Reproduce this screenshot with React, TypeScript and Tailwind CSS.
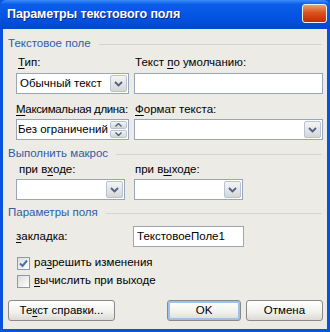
import { ReactNode } from 'react'

const Chevron = () => (
  <svg width="9" height="6" viewBox="0 0 9 6">
    <path d="M1 1 L4.5 4.5 L8 1" stroke="#4d6185" strokeWidth="1.8" fill="none" />
  </svg>
)

const DropButton = () => (
  <div className="w-[17px] m-px flex items-center justify-center border border-[#b9c3d6] rounded-[2px] bg-[linear-gradient(#f4f4f4,#d6d6d6)]">
    <Chevron />
  </div>
)

const Combo = ({ width, text }: { width: string; text?: string }) => (
  <div className={`${width} h-[21px] flex border border-[#9aa6b8] bg-white`}>
    <div className="flex-1 px-[3px] flex items-center text-[11.5px] text-black whitespace-nowrap overflow-hidden">{text}</div>
    <DropButton />
  </div>
)

const Spin = ({ text }: { text: string }) => (
  <div className="w-[113px] h-[21px] flex border border-[#9aa6b8] bg-white">
    <div className="flex-1 px-[1px] flex items-center text-[11.5px] text-black whitespace-nowrap overflow-hidden">{text}</div>
    <div className="w-[17px] m-px flex flex-col gap-px">
      <div className="flex-1 flex items-center justify-center border border-[#b9c3d6] rounded-[2px] bg-[linear-gradient(#f4f4f4,#d6d6d6)]">
        <svg width="7" height="4" viewBox="0 0 7 4">
          <path d="M0.5 3.5 L3.5 0.5 L6.5 3.5" stroke="#4d6185" strokeWidth="1.4" fill="none" />
        </svg>
      </div>
      <div className="flex-1 flex items-center justify-center border border-[#b9c3d6] rounded-[2px] bg-[linear-gradient(#f4f4f4,#d6d6d6)]">
        <svg width="7" height="4" viewBox="0 0 7 4">
          <path d="M0.5 0.5 L3.5 3.5 L6.5 0.5" stroke="#4d6185" strokeWidth="1.4" fill="none" />
        </svg>
      </div>
    </div>
  </div>
)

const Section = ({ title }: { title: string }) => (
  <div className="h-[14px] flex items-center gap-[8px] pl-[5px] pr-[5px]">
    <span className="text-[11.5px] text-[#2e5da8] leading-none whitespace-nowrap">{title}</span>
    <div className="flex-1 h-px bg-[#d6d4cf]" />
  </div>
)

const Label = ({ children }: { children: ReactNode }) => (
  <div className="h-[14px] flex items-center text-[11.5px] text-black leading-none whitespace-nowrap">{children}</div>
)

const U = ({ children }: { children: ReactNode }) => <span className="underline underline-offset-2">{children}</span>

const Check = ({ checked, children }: { checked?: boolean; children: ReactNode }) => (
  <div className="h-[16px] flex items-center pl-[14px]">
    <div className="w-[13px] h-[13px] border border-[#8a99b3] bg-[linear-gradient(135deg,#dcdcd8,#ffffff)] flex items-center justify-center">
      {checked && (
        <svg width="9" height="9" viewBox="0 0 9 9">
          <path d="M1 4.5 L3.5 7 L8 1.5" stroke="#4f6fae" strokeWidth="2" fill="none" />
        </svg>
      )}
    </div>
    <span className="ml-[4px] text-[11.5px] text-black leading-none whitespace-nowrap">{children}</span>
  </div>
)

const Button = ({ children, width, focus }: { children: ReactNode; width: string; focus?: boolean }) => (
  <div
    className={`${width} h-[21px] rounded-[3px] border border-[#8a8a8a] flex items-center justify-center text-[11.5px] text-black whitespace-nowrap bg-[linear-gradient(#ffffff,#f0f0ec_60%,#dcdad4)] ${focus ? 'shadow-[inset_0_0_0_2px_#9ec1ea]' : ''}`}
  >
    {children}
  </div>
)

export default function App() {
  return (
    <div className="w-[330px] h-[332px] flex flex-col font-['Liberation_Sans',sans-serif] bg-[#0852dc]">
      <div className="h-[29px] flex items-center justify-between pl-[7px] pr-[3px] rounded-t-[6px] bg-[linear-gradient(#3b8df7,#0a5ee9_15%,#0453e2_60%,#0347cc)]">
        <span className="text-[12.5px] font-bold text-white tracking-[-0.1px] [text-shadow:1px_1px_0_#0a2a80]">
          Параметры текстового поля
        </span>
        <div className="w-[25px] h-[19px] mb-[3px] rounded-[3px] border border-[#f0f0f0] bg-[linear-gradient(#e8a074,#d8541c_45%,#c82806)]" />
      </div>
      <div className="flex-1 mx-[3px] mb-[3px] bg-[#ecebe6] flex flex-col">
        <div className="mt-[8px]">
          <Section title="Текстовое поле" />
        </div>
        <div className="flex pl-[13px] mt-[5px]">
          <div className="w-[113px] flex flex-col gap-[3px]">
            <Label>
              <span className="ml-[2px]">
                <U>Т</U>ип:
              </span>
            </Label>
            <Combo width="w-[113px]" text="Обычный текст" />
          </div>
          <div className="ml-[5px] w-[189px] flex flex-col gap-[3px]">
            <Label>
              <span className="ml-[1px]">
                Текст <U>п</U>о умолчанию:
              </span>
            </Label>
            <div className="h-[21px] border border-[#9aa6b8] bg-white" />
          </div>
        </div>
        <div className="flex pl-[13px] mt-[9px]">
          <div className="w-[113px] flex flex-col gap-[2px]">
            <Label>
              <span className="tracking-[-0.35px]">
                <U>М</U>аксимальная длина:
              </span>
            </Label>
            <Spin text="Без ограничений" />
          </div>
          <div className="ml-[5px] w-[189px] flex flex-col gap-[2px]">
            <Label>
              <span className="ml-[1px]">
                <U>Ф</U>ормат текста:
              </span>
            </Label>
            <Combo width="w-[189px]" />
          </div>
        </div>
        <div className="mt-[7px]">
          <Section title="Выполнить макрос" />
        </div>
        <div className="flex pl-[13px] mt-[2px]">
          <div className="w-[109px] flex flex-col gap-[2px]">
            <Label>
              <span className="ml-[3px]">
                при в<U>х</U>оде:
              </span>
            </Label>
            <Combo width="w-[109px]" />
          </div>
          <div className="ml-[9px] w-[109px] flex flex-col gap-[2px]">
            <Label>
              <span className="ml-[1px]">
                при в<U>ы</U>ходе:
              </span>
            </Label>
            <Combo width="w-[109px]" />
          </div>
        </div>
        <div className="mt-[6px]">
          <Section title="Параметры поля" />
        </div>
        <div className="flex items-center pl-[13px] mt-[6px]">
          <div className="w-[117px] text-[11.5px] text-black">
            <U>з</U>акладка:
          </div>
          <div className="w-[111px] h-[21px] border border-[#9aa6b8] bg-white flex items-center px-[3px] text-[11.5px] text-black">
            ТекстовоеПоле1
          </div>
        </div>
        <div className="mt-[8px]">
          <Check checked>
            ра<U>з</U>решить изменения
          </Check>
        </div>
        <div className="mt-[2px]">
          <Check>
            <U>в</U>ычислить при выходе
          </Check>
        </div>
        <div className="flex pl-[5px] mt-[11px]">
          <Button width="w-[107px]">
            Те<U>к</U>ст справки...
          </Button>
          <div className="flex-1" />
          <Button width="w-[74px]" focus>
            OK
          </Button>
          <div className="w-[5px]" />
          <Button width="w-[77px]">Отмена</Button>
          <div className="w-[4px]" />
        </div>
      </div>
    </div>
  )
}
